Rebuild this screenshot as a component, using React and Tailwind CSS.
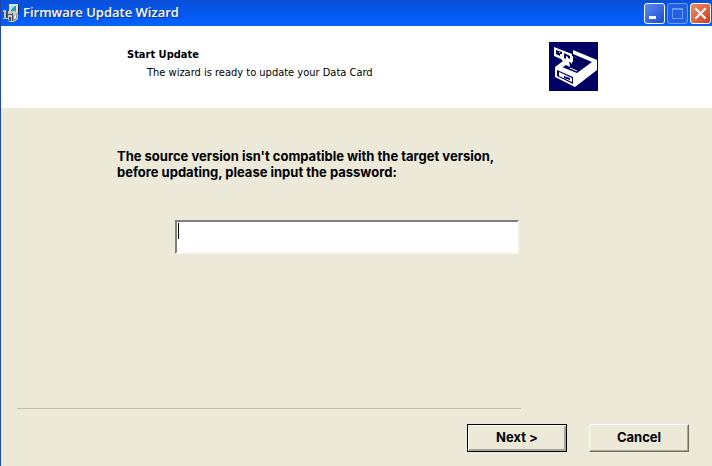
import React, { useState } from "react";

const InstallerIcon = () => (
  <svg width="16" height="18" viewBox="0 0 16 18" aria-hidden="true">
    <rect x="6" y="0" width="9" height="9" fill="#d8e4e8" />
    <rect x="8" y="2" width="5" height="5" fill="#1f9fb4" />
    <path d="M8 2h4l-4 4z" fill="#8fe6ea" />
    <path d="M15 1v8H9v1h7V1z" fill="#20304c" />
    <path d="M0 6h3v2H0zM1 8h3v7H1zM0 14h5v1H0z" fill="#b9c4c6" />
    <path d="M3 8h1v6H3z" fill="#33405a" />
    <path d="M5 7h8l2 3v5l-4 3H6l-1-3z" fill="#c9c8bc" />
    <path d="M5 10h5v1H5zM6 13h2v4H6zM9 9h1v8H9z" fill="#4c5560" />
    <path d="M10 12l4-2v4l-3 3h-1z" fill="#8f938e" />
    <path d="M11 12l2-1v3l-2 1z" fill="#f4f2e4" />
  </svg>
);

const DrawerLogo = () => (
  <svg width="49" height="49" viewBox="0 0 49 49" aria-hidden="true">
    <defs>
      <pattern id="dots" width="4" height="4" patternUnits="userSpaceOnUse">
        <rect width="4" height="4" fill="#00005e" />
        <rect width="2" height="2" fill="#000074" />
      </pattern>
    </defs>
    <rect width="49" height="49" fill="url(#dots)" />
    {/* box */}
    <path d="M24 8L48 18V28L26 45L6 35V25L14 19L24 14Z" fill="#fff" />
    <path d="M24 12L43 20L28 31L13 25L20 20L24 20Z" fill="#000060" />
    <path d="M21 26L28 29" stroke="#fff" strokeWidth="1" />
    {/* drawer front */}
    <path d="M8 28L24 35V42L8 34Z" fill="#000060" />
    <path d="M10 30L23 36V40L10 34Z" fill="#fff" />
    <path d="M15 34L21 36V38L15 36Z" fill="#000060" />
    {/* card */}
    <path d="M5 5L23 12V22L20 19L21 25L17 23L14 25L11 23L15 20L12 17L5 14Z" fill="#fff" />
    <path d="M7 8L13 10V12L11 12V14L7 12Z" fill="#000060" />
    <path d="M15 11L21 14V17L19 16V15L17 14V17L15 16Z" fill="#000060" />
    <path d="M10 10h1v1h-1z" fill="#fff" />
  </svg>
);

const TitleBar = () => (
  <header className="flex h-[26px] items-center gap-1 bg-linear-to-b from-[#0a50d8] via-[#0458ee] to-[#0362fb] pl-[2px] pr-px">
    <InstallerIcon />
    <h1 className="flex-1 font-['Open_Sans',sans-serif] text-[13px] font-semibold text-white [text-shadow:1px_1px_0_#0a2f9c]">
      Firmware Update Wizard
    </h1>
    <div className="flex gap-[2px]">
      <button
        type="button"
        aria-label="Minimize"
        className="h-[21px] w-[21px] rounded-[3px] border border-white bg-linear-to-br from-[#5b8bf0] to-[#1c4bd0]"
      >
        <svg width="19" height="19" viewBox="0 0 19 19">
          <path d="M4 12h7v3H4z" fill="#fff" />
        </svg>
      </button>
      <button
        type="button"
        aria-label="Maximize"
        disabled
        className="h-[21px] w-[21px] rounded-[3px] border border-[#6f9cf5] bg-[#2060e4]"
      >
        <svg width="19" height="19" viewBox="0 0 19 19">
          <path d="M4 4h11v11H4zM5 6v8h9V6z" fill="#6d98f0" fillRule="evenodd" />
        </svg>
      </button>
      <button
        type="button"
        aria-label="Close"
        className="h-[21px] w-[21px] rounded-[3px] border border-white bg-linear-to-br from-[#ec8a6c] to-[#cc3c14]"
      >
        <svg width="19" height="19" viewBox="0 0 19 19">
          <path d="M5 5l9 9M14 5l-9 9" stroke="#fff" strokeWidth="2" strokeLinecap="square" />
        </svg>
      </button>
    </div>
  </header>
);

const App = () => {
  const [password, setPassword] = useState("");

  return (
    <div className="flex min-h-screen flex-col border-l border-[#1c48b0] bg-[#ece9d8] text-black">
      <TitleBar />
      <section className="flex items-start justify-between bg-white pt-4 pr-[114px] pb-[17px] pl-[126px]">
        <div className="pt-1 font-['DejaVu_Sans_Condensed','DejaVu_Sans',sans-serif] text-[11px] leading-[18px]">
          <h2 className="font-bold">Start Update</h2>
          <p className="pl-5">The wizard is ready to update your Data Card</p>
        </div>
        <DrawerLogo />
      </section>

      <main className="flex flex-1 flex-col pt-10 font-[Inter,'Liberation_Sans',sans-serif] font-bold">
        <label htmlFor="password" className="pl-[116px] text-[13px] leading-4">
          The source version isn't compatible with the target version,
          <br />
          before updating, please input the password:
        </label>
        <div className="relative mt-10 mr-[193px] ml-[174px]">
          <input
            id="password"
            type="text"
            value={password}
            onChange={(e) => setPassword(e.target.value)}
            className="block h-[34px] w-full border-2 border-t-[#808078] border-r-[#f8f7f0] border-b-[#f8f7f0] border-l-[#808078] bg-white px-1 text-[13px] outline-none"
          />
          <span className="pointer-events-none absolute top-[3px] left-[3px] h-4 w-px bg-black" />
        </div>

        <footer className="mt-auto pb-[14px]">
          <hr className="mr-[191px] ml-4 border-[#c2bfae]" />
          <div className="mt-[15px] mr-[23px] flex justify-end gap-[22px] text-[13px]">
            <button
              type="submit"
              className="h-7 w-[100px] border border-black bg-[#ece9d8] shadow-[inset_1px_1px_0_#fff,inset_-2px_-2px_0_#a8a594]"
            >
              Next &gt;
            </button>
            <button
              type="button"
              className="h-7 w-[100px] border border-t-white border-r-[#716f64] border-b-[#716f64] border-l-white bg-[#ece9d8] shadow-[inset_-1px_-1px_0_#aca899]"
            >
              Cancel
            </button>
          </div>
        </footer>
      </main>
    </div>
  );
};

export default App;
